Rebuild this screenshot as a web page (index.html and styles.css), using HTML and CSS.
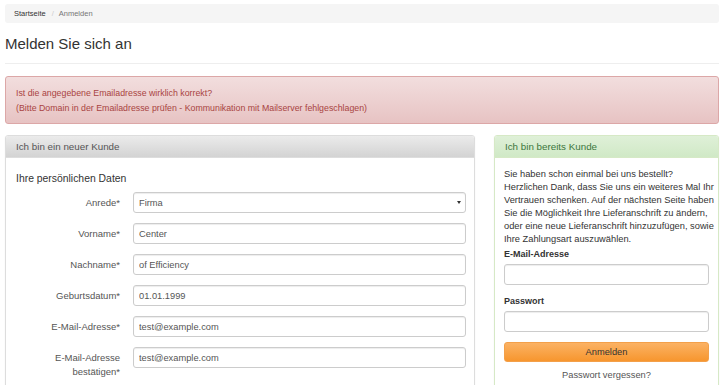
FILE: index.html
```html
<!DOCTYPE html>
<html lang="de">
<head>
    <meta charset="UTF-8">
    <meta name="viewport" content="width=device-width, initial-scale=1.0">
    <title>Anmelden</title>
    <link rel="stylesheet" href="styles.css">
</head>
<body>
    <div class="page">
        <ol class="breadcrumb">
            <li><a href="#">Startseite</a></li>
            <li class="active">Anmelden</li>
        </ol>

        <div class="page-header">
            <h1>Melden Sie sich an</h1>
        </div>

        <div class="alert alert-danger">
            Ist die angegebene Emailadresse wirklich korrekt?<br>
            (Bitte Domain in der Emailadresse prüfen - Kommunikation mit Mailserver fehlgeschlagen)
        </div>

        <div class="login-columns">
            <div class="panel panel-default">
                <div class="panel-heading">Ich bin ein neuer Kunde</div>
                <div class="panel-body">
                    <h4 class="section-title">Ihre persönlichen Daten</h4>
                    <form class="form-horizontal">
                        <div class="form-row">
                            <label for="anrede">Anrede*</label>
                            <div class="select-wrap">
                                <select id="anrede" name="anrede">
                                    <option>Firma</option>
                                    <option>Herr</option>
                                    <option>Frau</option>
                                </select>
                            </div>
                        </div>
                        <div class="form-row">
                            <label for="vorname">Vorname*</label>
                            <input type="text" id="vorname" name="vorname" value="Center">
                        </div>
                        <div class="form-row">
                            <label for="nachname">Nachname*</label>
                            <input type="text" id="nachname" name="nachname" value="of Efficiency">
                        </div>
                        <div class="form-row">
                            <label for="geburtsdatum">Geburtsdatum*</label>
                            <input type="text" id="geburtsdatum" name="geburtsdatum" value="01.01.1999">
                        </div>
                        <div class="form-row">
                            <label for="email">E-Mail-Adresse*</label>
                            <input type="email" id="email" name="email" value="test@example.com">
                        </div>
                        <div class="form-row">
                            <label for="email2">E-Mail-Adresse bestätigen*</label>
                            <input type="email" id="email2" name="email2" value="test@example.com">
                        </div>
                    </form>
                </div>
            </div>

            <div class="panel panel-success">
                <div class="panel-heading">Ich bin bereits Kunde</div>
                <div class="panel-body">
                    <p class="intro">Sie haben schon einmal bei uns bestellt?<br>
                        Herzlichen Dank, dass Sie uns ein weiteres Mal Ihr<br>
                        Vertrauen schenken. Auf der nächsten Seite haben<br>
                        Sie die Möglichkeit Ihre Lieferanschrift zu ändern,<br>
                        oder eine neue Lieferanschrift hinzuzufügen, sowie<br>
                        Ihre Zahlungsart auszuwählen.</p>
                    <form class="login-form">
                        <div class="form-field">
                            <label for="login-email">E-Mail-Adresse</label>
                            <input type="email" id="login-email" name="login-email">
                        </div>
                        <div class="form-field">
                            <label for="login-password">Passwort</label>
                            <input type="password" id="login-password" name="login-password">
                        </div>
                        <button type="submit" class="btn-login">Anmelden</button>
                        <a href="#" class="forgot-link">Passwort vergessen?</a>
                    </form>
                </div>
            </div>
        </div>
    </div>
</body>
</html>
```

FILE: styles.css
```css
* {
    margin: 0;
    padding: 0;
    box-sizing: border-box;
}

body {
    font-family: "Liberation Sans", Arial, sans-serif;
    font-size: 9px;
    color: #333;
    background: #fff;
}

.page {
    padding: 4px 6px 0 5px;
}

/* breadcrumb */

.breadcrumb {
    list-style: none;
    display: flex;
    align-items: center;
    height: 19px;
    padding: 0 9px;
    background: #f5f5f5;
    border-radius: 3px;
    font-size: 7.5px;
}

.breadcrumb a {
    color: #333;
    text-decoration: none;
}

.breadcrumb li + li::before {
    content: "/";
    padding: 0 5px 0 6px;
    color: #ccc;
}

.breadcrumb .active {
    color: #777;
}

/* page header */

.page-header {
    margin-top: 12px;
    padding-bottom: 10px;
    border-bottom: 1px solid #eee;
}

.page-header h1 {
    font-size: 15px;
    font-weight: 400;
    line-height: 18px;
}

/* alert */

.alert {
    margin-top: 12px;
    padding: 9px 10px 8px;
    font-size: 8.8px;
    line-height: 14.5px;
    border-radius: 3px;
}

.alert-danger {
    color: #a94442;
    background: linear-gradient(to bottom, #f2dede 0%, #e7c3c3 100%);
    border: 1px solid #dca7a7;
}

/* columns & panels */

.login-columns {
    display: grid;
    grid-template-columns: 470px 225px;
    column-gap: 19px;
    align-items: start;
    margin-top: 11px;
}

.panel {
    border: 1px solid #ddd;
    border-radius: 3px;
    background: #fff;
    box-shadow: 0 1px 2px rgba(0, 0, 0, 0.05);
}

.panel-heading {
    height: 22px;
    display: flex;
    align-items: center;
    padding: 0 10px;
    font-size: 9.8px;
    border-bottom: 1px solid #ddd;
    border-radius: 2px 2px 0 0;
}

.panel-default .panel-heading {
    color: #555;
    background: linear-gradient(to bottom, #ebebeb 0%, #d3d3d3 100%);
}

.panel-success {
    border-color: #d6e9c6;
}

.panel-success .panel-heading {
    color: #3c763d;
    background: linear-gradient(to bottom, #dff0d8 0%, #d0e9c6 100%);
    border-bottom-color: #d6e9c6;
}

.panel-default .panel-body {
    padding: 14px 8px 24px 10px;
}

.panel-success .panel-body {
    padding: 10px 9px 14px;
}

.section-title {
    font-size: 10.4px;
    font-weight: 400;
    line-height: 14px;
    margin-bottom: 6px;
}

/* horizontal form */

.form-horizontal {
    display: flex;
    flex-direction: column;
    gap: 10px;
}

.form-row {
    display: grid;
    grid-template-columns: 104px 1fr;
    column-gap: 13px;
    align-items: start;
}

.form-row label {
    text-align: right;
    color: #555;
    font-size: 9.5px;
    line-height: 13.5px;
    padding: 4px 0 0 30px;
}

input,
select {
    display: block;
    width: 100%;
    height: 21px;
    padding: 0 5px;
    font-family: "Liberation Sans", Arial, sans-serif;
    font-size: 9.3px;
    color: #555;
    background: #fff;
    border: 1px solid #ccc;
    border-radius: 3px;
    box-shadow: inset 0 1px 1px rgba(0, 0, 0, 0.075);
    outline: none;
}

.select-wrap {
    position: relative;
}

.select-wrap select {
    appearance: none;
    -webkit-appearance: none;
}

.select-wrap::after {
    content: "";
    position: absolute;
    right: 5px;
    top: 9px;
    border-left: 2px solid transparent;
    border-right: 2px solid transparent;
    border-top: 3px solid #333;
}

/* login form */

.intro {
    font-size: 9.3px;
    line-height: 13px;
    white-space: nowrap;
    margin-bottom: 2px;
}

.form-field {
    margin-bottom: 10px;
}

.form-field label {
    display: block;
    font-size: 9px;
    font-weight: 700;
    line-height: 13px;
    margin-bottom: 3px;
}

.btn-login {
    display: block;
    width: 100%;
    height: 20px;
    font-family: "Liberation Sans", Arial, sans-serif;
    font-size: 9.3px;
    color: #333;
    background: linear-gradient(to bottom, #fbb264 0%, #f7962e 100%);
    border: 1px solid #f3a04a;
    border-radius: 3px;
    cursor: pointer;
}

.forgot-link {
    display: block;
    margin-top: 7px;
    text-align: center;
    font-size: 9.3px;
    line-height: 13px;
    color: #555;
    text-decoration: none;
}
```
